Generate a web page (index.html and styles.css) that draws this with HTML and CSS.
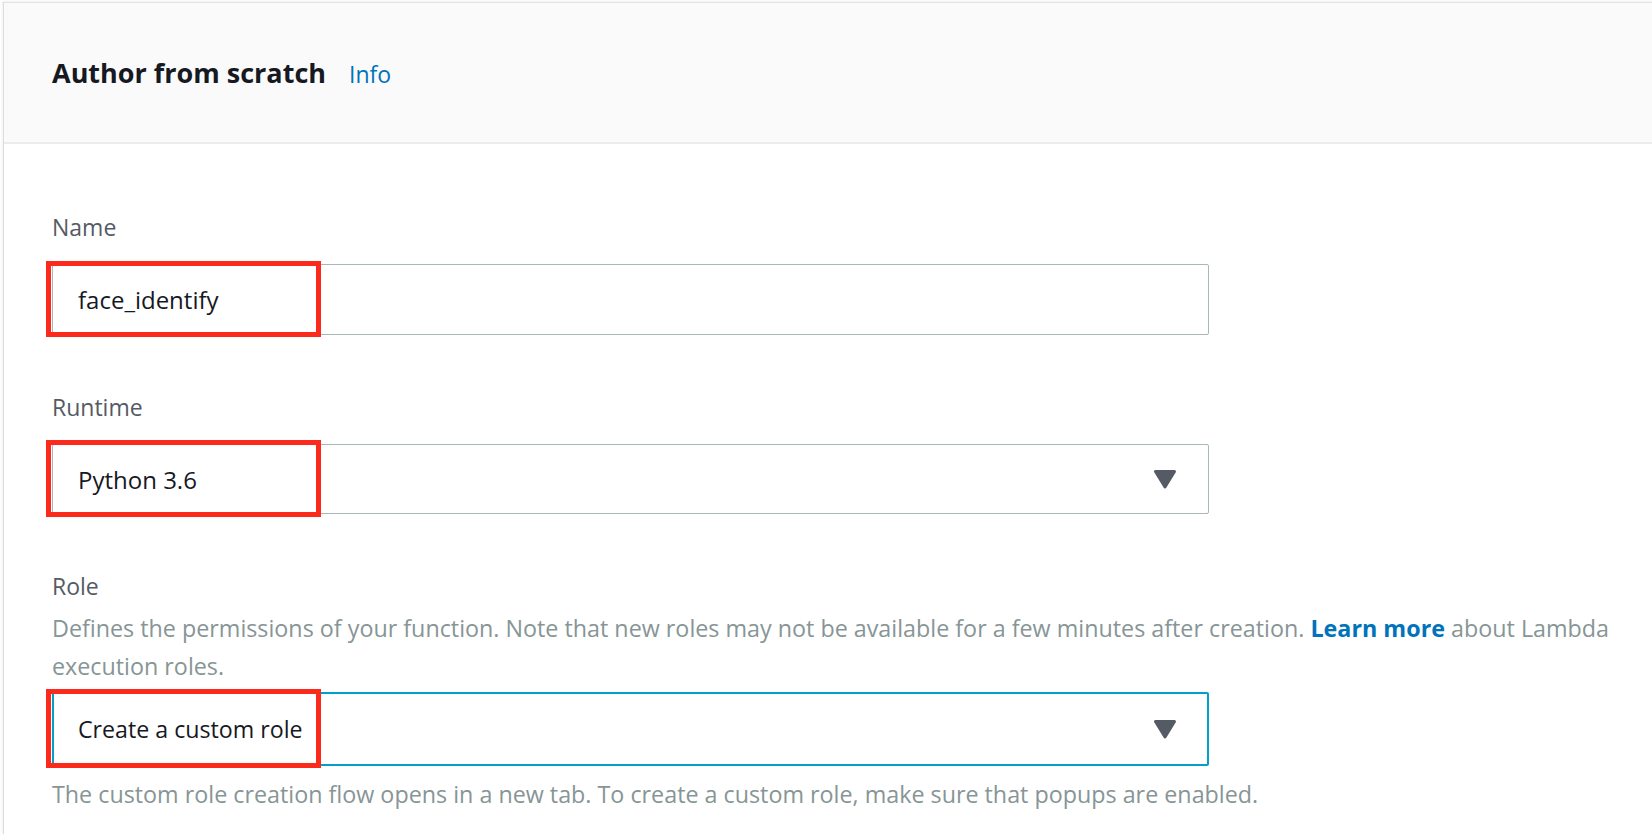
FILE: index.html
```html
<!DOCTYPE html>
<html lang="en">
<head>
<meta charset="utf-8">
<title>Author from scratch</title>
<link rel="stylesheet" href="styles.css">
</head>
<body>
<div class="card">
  <div class="card-header">
    <h2 class="title">Author from scratch</h2>
    <a class="info" href="#">Info</a>
  </div>
  <div class="card-body">
    <div class="field">
      <div class="label">Name</div>
      <div class="control control-input">
        <div class="input">face_identify</div>
        <span class="highlight"></span>
      </div>
    </div>
    <div class="field field-gap">
      <div class="label">Runtime</div>
      <div class="control control-select">
        <div class="select">
          <span class="value">Python 3.6</span>
          <svg class="caret" width="24" height="20" viewBox="0 0 24 20"><path d="M2.5 2.5 H21.5 L12 18 Z" fill="#545b64" stroke="#545b64" stroke-width="3" stroke-linejoin="round"/></svg>
        </div>
        <span class="highlight"></span>
      </div>
    </div>
    <div class="field field-gap">
      <div class="label">Role</div>
      <p class="desc">Defines the permissions of your function. Note that new roles may not be available for a few minutes after creation. <a class="learn" href="#">Learn more</a> about Lambda execution roles.</p>
      <div class="control control-focus">
        <div class="select select-focus">
          <span class="value value-role">Create a custom role</span>
          <svg class="caret" width="24" height="20" viewBox="0 0 24 20"><path d="M2.5 2.5 H21.5 L12 18 Z" fill="#545b64" stroke="#545b64" stroke-width="3" stroke-linejoin="round"/></svg>
        </div>
        <span class="highlight"></span>
      </div>
      <p class="hint">The custom role creation flow opens in a new tab. To create a custom role, make sure that popups are enabled.</p>
    </div>
  </div>
</div>
</body>
</html>
```

FILE: styles.css
```css
html, body {
  margin: 0;
  padding: 0;
  background: #ffffff;
  overflow: hidden;
}

body {
  font-family: "Open Sans", "Noto Sans", sans-serif;
  color: #16191f;
}

.card {
  margin: 2px -20px 0 3px;
  border-top: 1px solid #dfe3e4;
  border-left: 1px solid #d9dedf;
  box-shadow: -1px -1px 2px rgba(0, 0, 0, 0.06);
  background: #ffffff;
  height: 900px;
}

.card-header {
  height: 139px;
  background: #fafafa;
  border-bottom: 2px solid #eaeded;
  display: flex;
  align-items: center;
  padding-left: 48px;
  gap: 23px;
}

.title {
  margin: 0;
  font-size: 27px;
  line-height: 36px;
  font-weight: 700;
  color: #16191f;
}

.info {
  font-size: 23px;
  line-height: 36px;
  color: #0073bb;
  text-decoration: none;
  padding-top: 2px;
}

.card-body {
  padding: 67px 0 0 48px;
  display: flex;
  flex-direction: column;
}

.field {
  display: flex;
  flex-direction: column;
}

.field-gap {
  margin-top: 56px;
}

.label {
  font-size: 23px;
  line-height: 32px;
  color: #545b64;
}

.control {
  position: relative;
  width: 1157px;
  margin-top: 21px;
}

.input,
.select {
  box-sizing: border-box;
  border: 1px solid #aab7b8;
  border-radius: 2px;
  font-size: 24px;
  color: #16191f;
  display: flex;
  align-items: center;
  padding-left: 25px;
}

.input {
  height: 71px;
}

.select {
  height: 70px;
  justify-content: space-between;
  padding-right: 31px;
}

.select-focus {
  height: 74px;
  border: 2px solid #00a1c9;
  padding-left: 24px;
  padding-right: 30px;
}

.value-role {
  font-size: 23.2px;
}

.control-focus {
  margin-top: 7px;
}

.caret {
  display: block;
}

.highlight {
  position: absolute;
  left: -6px;
  top: -3px;
  bottom: -2px;
  width: 275px;
  box-sizing: border-box;
  border: 5px solid #fb2a1d;
}

.control-select .highlight {
  top: -4px;
  bottom: -3px;
}

.desc,
.hint {
  margin: 7px 0 0 0;
  font-size: 23.3px;
  line-height: 38px;
  color: #879596;
}

.hint {
  margin-top: 9px;
}

.learn {
  color: #0073bb;
  font-weight: 700;
  text-decoration: none;
}
```
